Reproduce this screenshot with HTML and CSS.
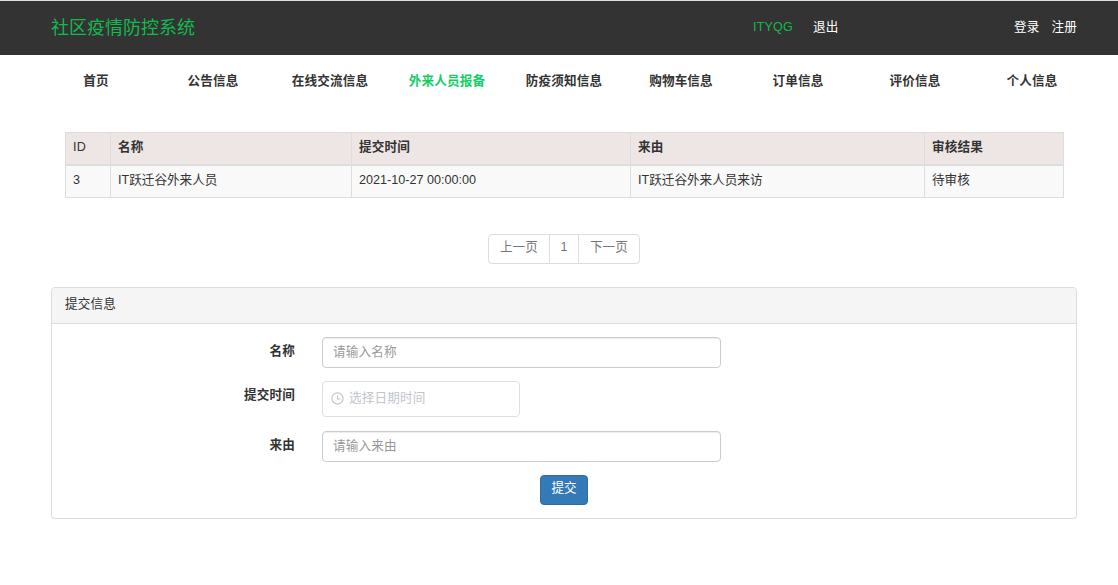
FILE: index.html
```html
<!DOCTYPE html>
<html lang="zh-CN">
<head>
    <meta charset="UTF-8">
    <meta name="viewport" content="width=device-width, initial-scale=1.0">
    <link rel="stylesheet" href="styles.css">
    <title>社区疫情防控系统</title>
</head>
<body>
    <header class="topbar">
        <div class="container topbar-inner">
            <a href="#" class="brand">社区疫情防控系统</a>
            <div class="user">
                <a href="#" class="username">ITYQG</a>
                <a href="#">退出</a>
            </div>
            <div class="account">
                <a href="#">登录</a>
                <a href="#">注册</a>
            </div>
        </div>
    </header>

    <nav class="menu">
        <a href="#">首页</a>
        <a href="#">公告信息</a>
        <a href="#">在线交流信息</a>
        <a href="#" class="active">外来人员报备</a>
        <a href="#">防疫须知信息</a>
        <a href="#">购物车信息</a>
        <a href="#">订单信息</a>
        <a href="#">评价信息</a>
        <a href="#">个人信息</a>
    </nav>

    <main class="container">
        <table class="table">
            <colgroup>
                <col class="col-id">
                <col class="col-name">
                <col class="col-time">
                <col class="col-reason">
                <col class="col-result">
            </colgroup>
            <thead>
                <tr>
                    <th class="id">ID</th>
                    <th>名称</th>
                    <th>提交时间</th>
                    <th>来由</th>
                    <th>审核结果</th>
                </tr>
            </thead>
            <tbody>
                <tr>
                    <td>3</td>
                    <td>IT跃迁谷外来人员</td>
                    <td>2021-10-27 00:00:00</td>
                    <td>IT跃迁谷外来人员来访</td>
                    <td>待审核</td>
                </tr>
            </tbody>
        </table>

        <div class="pagination">
            <a href="#">上一页</a>
            <a href="#">1</a>
            <a href="#">下一页</a>
        </div>

        <div class="panel">
            <div class="panel-heading">提交信息</div>
            <form class="panel-body">
                <div class="form-group">
                    <label for="name">名称</label>
                    <input type="text" id="name" class="form-control" placeholder="请输入名称">
                </div>
                <div class="form-group">
                    <label for="time">提交时间</label>
                    <div class="date-editor">
                        <svg class="clock" viewBox="0 0 14 14" fill="none" stroke="currentColor" stroke-width="1.2">
                            <circle cx="7" cy="7" r="6"/>
                            <path d="M7 3.5V7.5H10.2"/>
                        </svg>
                        <input type="text" id="time" placeholder="选择日期时间">
                    </div>
                </div>
                <div class="form-group">
                    <label for="reason">来由</label>
                    <input type="text" id="reason" class="form-control" placeholder="请输入来由">
                </div>
                <button type="button" class="btn">提交</button>
            </form>
        </div>
    </main>
</body>
</html>
```

FILE: styles.css
```css
* {
    box-sizing: border-box;
}

body {
    margin: 0;
    padding-left: 10px;
    font-family: "Liberation Sans", "Noto Sans CJK SC", sans-serif;
    font-size: 12.6px;
    line-height: 18px;
    letter-spacing: 0.15px;
    color: #333;
    background-color: #fff;
}

a {
    color: inherit;
    text-decoration: none;
}

.container {
    width: 1026px;
    margin: 0 auto;
}

/* top bar */
.topbar {
    height: 55px;
    margin-left: -10px;
    padding-left: 10px;
    border-top: 1px solid #dcdfe3;
    background-color: #333;
    color: #fff;
}

.topbar-inner {
    display: flex;
    align-items: center;
    height: 52px;
}

.brand {
    width: 702px;
    padding-top: 2px;
    font-size: 18px;
    letter-spacing: 0;
    color: #11bb4c;
}

.user {
    display: flex;
    gap: 20px;
    flex: 1;
}

.username {
    color: #11bb4c;
}

.account {
    display: flex;
    gap: 12px;
}

/* main menu */
.menu {
    display: grid;
    grid-template-columns: repeat(9, 117px);
    justify-content: center;
    padding: 17px 0 19px;
    text-align: center;
    font-weight: bold;
}

.menu .active {
    color: #13ce66;
}

/* list */
.table {
    width: 999px;
    margin: 23px 13px 0 14px;
    border-collapse: collapse;
    table-layout: fixed;
}

.table th,
.table td {
    height: 32px;
    padding: 5px 7px 8px;
    border: 1px solid #ddd;
    text-align: left;
}

.table th {
    border-bottom-width: 2px;
    background-color: #eee5e5;
}

.table .id {
    font-weight: normal;
}

.table td {
    background-color: #f9f9f9;
    letter-spacing: 0;
}

.col-id { width: 45px; }
.col-name { width: 241px; }
.col-time { width: 279px; }
.col-reason { width: 294px; }

.pagination {
    display: grid;
    grid-template-columns: 60px 29px 61px;
    width: 152px;
    height: 30px;
    margin: 36px auto 23px;
    border: 1px solid #ddd;
    border-radius: 4px;
    text-align: center;
    color: #777;
}

.pagination a {
    padding-top: 3px;
}

.pagination a + a {
    border-left: 1px solid #ddd;
}

/* form */
.panel {
    height: 232px;
    border: 1px solid #ddd;
    border-radius: 4px;
    box-shadow: 0 1px 1px rgba(0, 0, 0, 0.05);
}

.panel-heading {
    height: 36px;
    padding: 7px 13px;
    border-bottom: 1px solid #ddd;
    border-radius: 3px 3px 0 0;
    background-color: #f5f5f5;
}

.panel-body {
    display: flex;
    flex-direction: column;
    gap: 13px;
    padding: 13px 0;
}

.form-group {
    display: flex;
    gap: 27px;
}

.form-group label {
    width: 243px;
    padding-top: 5px;
    text-align: right;
    font-weight: bold;
}

input {
    font: inherit;
    letter-spacing: inherit;
    color: #555;
}

.form-control {
    width: 399px;
    height: 31px;
    padding: 3px 10px 5px;
    border: 1px solid #ccc;
    border-radius: 4px;
    box-shadow: inset 0 1px 1px rgba(0, 0, 0, 0.075);
}

.form-control::placeholder {
    color: #999;
}

.date-editor {
    display: flex;
    align-items: center;
    gap: 5px;
    width: 198px;
    height: 36px;
    margin-bottom: 1px;
    padding: 0 8px 2px;
    border: 1px solid #dcdfe6;
    border-radius: 4px;
    color: #c0c4cc;
}

.date-editor input {
    width: 150px;
    padding: 0;
    border: 0;
    outline: 0;
}

.date-editor input::placeholder {
    color: #c0c4cc;
}

.clock {
    width: 13px;
    height: 13px;
}

.btn {
    align-self: center;
    width: 48px;
    height: 30px;
    padding: 0 0 4px;
    border: 1px solid #2e6da4;
    border-radius: 4px;
    background-color: #337ab7;
    font: inherit;
    color: #fff;
}
```
